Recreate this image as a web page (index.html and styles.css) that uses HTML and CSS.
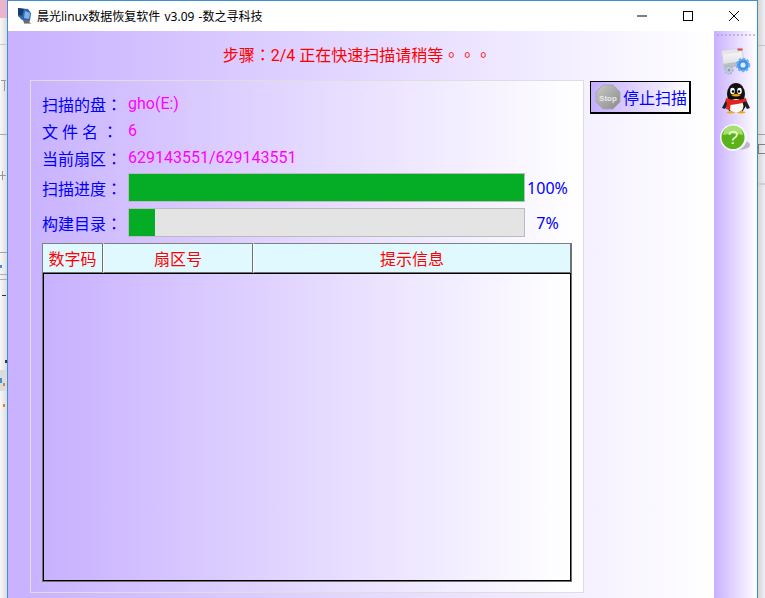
FILE: index.html
```html
<!DOCTYPE html>
<html lang="zh-CN">
<head>
<meta charset="utf-8">
<title>晨光linux数据恢复软件</title>
<link rel="stylesheet" href="styles.css">
</head>
<body>
<div class="desk">
  <div class="strip strip-left"></div>
  <div class="window">
    <header class="titlebar">
      <svg class="app-icon" viewBox="0 0 16 18" width="16" height="18">
        <path d="M1 1l10 1 3 4-1 8-8-1-4-4z" fill="#2f66b4"/>
        <path d="M1 1l6 1-2 7-4-1z" fill="#173a70"/>
        <path d="M8 4l5 2-1 6-5-1z" fill="#7fb0e6"/>
        <path d="M6 13h6l1 3H7z" fill="#6a6a6a"/>
        <path d="M7 16h7v1H7z" fill="#aaa"/>
      </svg>
      <span class="title">晨光linux数据恢复软件 v3.09 -数之寻科技</span>
      <div class="controls">
        <svg class="ctl" viewBox="0 0 46 30"><path d="M18 15h10" stroke="#000" fill="none"/></svg>
        <svg class="ctl" viewBox="0 0 46 30"><rect x="18.500" y="10.500" width="9" height="9" stroke="#000" fill="none"/></svg>
        <svg class="ctl" viewBox="0 0 46 30"><path d="M18 10l10 10M28 10l-10 10" stroke="#000" fill="none"/></svg>
      </div>
    </header>
    <div class="client">
      <main class="main">
        <div class="step">步骤<span class="punct" lang="zh-TW">：</span>2/4 正在快速扫描请稍等<span class="punct" lang="zh-TW">。。。</span></div>
        <div class="work">
          <section class="panel">
            <div class="row info"><span class="label">扫描的盘<span class="punct" lang="zh-TW">：</span></span><span class="value">gho(E:)</span></div>
            <div class="row info"><span class="label">文 件 名 <span class="punct" lang="zh-TW">：</span></span><span class="value">6</span></div>
            <div class="row info"><span class="label">当前扇区<span class="punct" lang="zh-TW">：</span></span><span class="value">629143551/629143551</span></div>
            <div class="progs">
              <div class="row prog"><span class="label">扫描进度<span class="punct" lang="zh-TW">：</span></span><div class="bar"><div class="fill" style="width:100%"></div></div><span class="pct">100%</span></div>
              <div class="row prog"><span class="label">构建目录<span class="punct" lang="zh-TW">：</span></span><div class="bar"><div class="fill" style="width:6.600%"></div></div><span class="pct">7%</span></div>
            </div>
            <div class="table">
              <div class="thead">
                <div class="th th-code">数字码</div>
                <div class="th th-sector">扇区号</div>
                <div class="th th-info">提示信息</div>
              </div>
              <div class="tbody"></div>
            </div>
          </section>
          <button class="stop" type="button">
            <svg class="stop-icon" viewBox="0 0 26 26" width="26" height="26">
              <defs><linearGradient id="sg" x1="0" y1="0" x2="1" y2="1"><stop offset="0" stop-color="#c9c9c9"/><stop offset="1" stop-color="#8a8a8a"/></linearGradient></defs>
              <path d="M8 1h10l7 7v10l-7 7H8l-7-7V8z" fill="url(#sg)" stroke="#a8a8a8"/>
              <text x="13" y="16.500" text-anchor="middle" class="stop-word">Stop</text>
            </svg>
            <span>停止扫描</span>
          </button>
        </div>
      </main>
      <aside class="side">
        <div class="dots"></div>
        <svg class="side-icon tool" viewBox="0 0 30 28" width="30" height="28">
          <defs><linearGradient id="wg" x1="0" y1="0" x2="0" y2="1"><stop offset="0" stop-color="#fff"/><stop offset="1" stop-color="#d8d8e0"/></linearGradient></defs>
          <path d="M1 4l20-3 2 14-21 5z" fill="url(#wg)" stroke="#cfcfd8"/>
          <path d="M1 4l20-3 .5 4L1 8z" fill="#e4e4ea"/>
          <rect x="16.500" y="1.500" width="5" height="2" fill="#d04848"/>
          <path d="M2 17l21-3v4L3 22z" fill="#b9bec8"/>
          <circle cx="8" cy="23" r="3.800" fill="#c9ced8" stroke="#aab2c0" stroke-width="1.600" stroke-dasharray="1.800 1"/>
          <circle cx="8" cy="23" r="1.500" fill="#6ea6e4"/>
          <circle cx="22" cy="18" r="6" fill="#3f8fe6" stroke="#6fb0f0" stroke-width="2.400" stroke-dasharray="2.400 1.500"/>
          <circle cx="22" cy="18" r="2.600" fill="#dcecfb"/>
        </svg>
        <svg class="side-icon qq" viewBox="0 0 28 32" width="28" height="32">
          <ellipse cx="14" cy="11" rx="9" ry="11" fill="#111"/>
          <ellipse cx="14" cy="21" rx="10" ry="9" fill="#111"/>
          <ellipse cx="14" cy="23" rx="7.500" ry="7" fill="#fafafa"/>
          <path d="M4 17L0 25l3 1 3-5zM24 17l4 8-3 1-3-5z" fill="#222"/>
          <ellipse cx="10.500" cy="8" rx="2.300" ry="3.200" fill="#fff"/><ellipse cx="17.500" cy="8" rx="2.300" ry="3.200" fill="#fff"/>
          <circle cx="11" cy="8.500" r="1.200" fill="#000"/><circle cx="17" cy="8.500" r="1.200" fill="#000"/>
          <path d="M9 12q5-2 10 0-5 3-10 0z" fill="#f2a900"/>
          <path d="M4 15q10 4 20 0l.5 3q-4 2.500-9 3l-7 1-.5 5-4-1 1-6-1.500-2z" fill="#e3241c"/>
          <path d="M4 29.500q5-3 9 0-4 2-9 0zM15 29.500q5-3 9 0-5 2-9 0z" fill="#f2a900"/>
        </svg>
        <svg class="side-icon help" viewBox="0 0 30 28" width="30" height="28">
          <ellipse cx="18" cy="21" rx="12" ry="5" fill="#8f8f8f" opacity=".55"/>
          <circle cx="13.500" cy="13.500" r="13.500" fill="#f6f6f6"/>
          <circle cx="13" cy="13.500" r="11.500" fill="#5cb21a"/>
          <path d="M3 11a10 9.500 0 0 1 20 0q-10-3-20 0z" fill="#a9df72"/>
          <text x="13" y="20" text-anchor="middle" class="help-word">?</text>
        </svg>
      </aside>
    </div>
  </div>
  <div class="strip strip-right"></div>
</div>
</body>
</html>
```
FILE: styles.css
```css
* { box-sizing: border-box; }
html, body { margin: 0; padding: 0; }
body { width: 765px; height: 598px; overflow: hidden; font-family: Roboto, "Noto Sans CJK SC", sans-serif; font-feature-settings: "chws" 0; text-spacing-trim: space-all; }
.desk { display: flex; width: 765px; height: 598px; }
.strip { flex: none; width: 7px; }
.strip-left {
  background:
    linear-gradient(#e9b4cc, #e9b4cc) 0 0 / 100% 18px no-repeat,
    linear-gradient(#c8c8c8, #c8c8c8) 0 44px / 100% 1px no-repeat,
    linear-gradient(#999, #999) 1px 80px / 5px 1px no-repeat,
    linear-gradient(#999, #999) 4px 80px / 1px 11px no-repeat,
    linear-gradient(#a8a8a8, #a8a8a8) 0 134px / 100% 1px no-repeat,
    linear-gradient(#999, #999) 2px 171px / 1px 9px no-repeat,
    linear-gradient(#999, #999) 0 175px / 6px 1px no-repeat,
    linear-gradient(#a0a0a0, #a0a0a0) 0 252px / 100% 1px no-repeat,
    linear-gradient(#3d8fd6, #3d8fd6) 0 265px / 2px 3px no-repeat,
    linear-gradient(#b0b0b0, #b0b0b0) 0 274px / 100% 1px no-repeat,
    linear-gradient(#b0b0b0, #b0b0b0) 0 279px / 100% 1px no-repeat,
    linear-gradient(#333, #333) 2px 295px / 4px 1px no-repeat,
    linear-gradient(#333, #333) 5px 360px / 2px 3px no-repeat,
    linear-gradient(#d8862a, #d8862a) 3px 383px / 2px 3px no-repeat,
    linear-gradient(#3d8fd6, #3d8fd6) 0 378px / 2px 5px no-repeat,
    linear-gradient(#d8862a, #d8862a) 3px 404px / 2px 3px no-repeat,
    linear-gradient(#dcdcdc, #dcdcdc) 0 370px / 100% 21px no-repeat,
    linear-gradient(90deg, #f8f8f8, #dcdcdc);
}
.strip-right {
  background:
    linear-gradient(#c0c0c0, #c0c0c0) 0 45px / 100% 1px no-repeat,
    linear-gradient(#a0a0a0, #a0a0a0) 0 134px / 100% 1px no-repeat,
    linear-gradient(#808080, #808080) 0 144px / 100% 1px no-repeat,
    linear-gradient(#808080, #808080) 0 153px / 100% 1px no-repeat,
    linear-gradient(#808080, #808080) 0 144px / 1px 10px no-repeat,
    linear-gradient(#cfcfcf, #cfcfcf) 0 183px / 100% 2px no-repeat,
    linear-gradient(90deg, #d4d4d4, #f0f0f0);
}
.window { flex: none; width: 751px; height: 610px; border: 1px solid #3d8fd6; display: flex; flex-direction: column; background: #fff; }
.titlebar { flex: none; height: 30px; display: flex; align-items: center; background: #fff; padding-left: 9px; }
.app-icon { flex: none; margin-right: 4px; }
.title { font-family: "Noto Sans", "Noto Sans CJK SC", sans-serif; font-size: 12px; word-spacing: 1px; color: #000; white-space: nowrap; }
.controls { margin-left: auto; display: flex; }
.ctl { width: 46px; height: 30px; display: block; }
.client { flex: 1; display: flex; min-height: 0; }
.main { width: 706px; flex: none; background: linear-gradient(90deg, #c8b1ff, #fff); padding-left: 22px; }
.step { height: 49px; padding-top: 13px; width: 654px; text-align: center; font-size: 16px; line-height: 20px; color: #f00; }
.punct { font-family: "Noto Sans CJK TC", sans-serif; }
.work { display: flex; align-items: flex-start; gap: 6px; }
.panel { width: 554px; height: 513px; border: 1px solid #dedede; background: linear-gradient(90deg, #c9b3ff, #fff); padding: 9px 11px 0 11px; }
.row { display: flex; align-items: center; }
.info { height: 27px; }
.label { width: 86px; flex: none; font-size: 16px; color: #00f; white-space: pre; }
.value { font-size: 16px; color: #f0f; }
.progs { display: flex; flex-direction: column; gap: 6px; margin-top: 2px; }
.prog { height: 29px; }
.bar { width: 397px; height: 29px; flex: none; border: 1px solid #bbb; background: #e4e4e4; }
.fill { height: 100%; background: #05ad26; }
.pct { flex: 1; padding-right: 2px; text-align: center; font-family: "Noto Sans", sans-serif; font-size: 16px; color: #00f; }
.table { margin-top: 6px; width: 530px; }
.thead { display: flex; height: 30px; }
.th { display: flex; align-items: center; justify-content: center; height: 30px; background: #dff9ff; border: 1px solid; border-color: #808080 #707070 #707070 #fff; font-size: 16px; color: #f00; }
.th-code { width: 61px; border-left-color: #808080; }
.th-sector { width: 150px; }
.th-info { width: 319px; border-right-width: 2px; }
.tbody { width: 528px; height: 308px; margin-left: 1px; border: 1px solid #000; box-shadow: 0 0 0 1px #707070; background: linear-gradient(90deg, #c8b1ff, #fff); }
.stop { width: 101px; height: 33px; margin-top: 1px; padding: 0 0 0 4px; display: flex; align-items: center; gap: 2px; border: 2px solid #000; border-top-width: 1px; border-left-width: 1px; background: linear-gradient(90deg, #c4aeff, #fff); font-family: inherit; font-size: 16px; color: #00f; white-space: nowrap; }
.stop-icon { flex: none; }
.stop-word { font: bold 8px "Liberation Sans", sans-serif; fill: #e8e8e8; }
.side { flex: 1; background: linear-gradient(90deg, #c8b1ff, #fff); display: flex; flex-direction: column; align-items: center; }
.dots { height: 2px; width: 38px; margin-top: 3px; background: repeating-linear-gradient(90deg, #a99ac8 0 2px, transparent 2px 4px); opacity: .6; }
.side-icon { display: block; flex: none; }
.tool { margin-top: 11px; margin-left: 1px; }
.qq { margin-top: 8px; }
.help { margin-top: 9px; margin-right: 1px; }
.help-word { font: 19px "Liberation Sans", sans-serif; fill: #eaffd0; }
```
